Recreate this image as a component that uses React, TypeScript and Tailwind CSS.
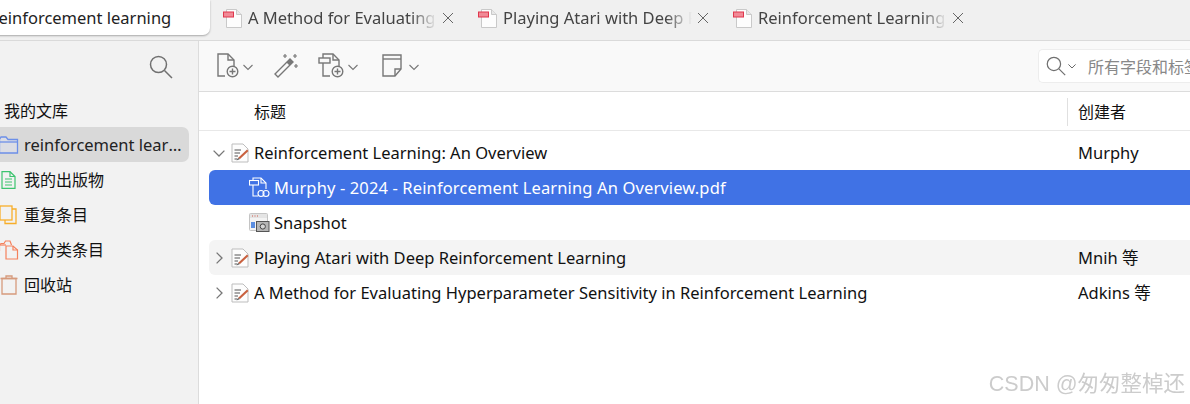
const uiFont = { fontFamily: '"Noto Sans", "Noto Sans CJK SC", sans-serif' };

function PdfIcon() {
  return (
    <svg width="20" height="20" viewBox="0 0 20 20" fill="none" className="shrink-0">
      <path d="M3.5 1.5H13.5L18.5 6.5V19.5H3.5Z" fill="#fdfdfd" stroke="#c9c9c9" />
      <path d="M13.5 1.5V6.5H18.5" fill="#e8e8e8" stroke="#c9c9c9" />
      <rect x="0.5" y="4" width="10" height="5" fill="#f08a96" stroke="#e0364c" />
    </svg>
  );
}

function CloseIcon() {
  return (
    <svg width="12" height="12" viewBox="0 0 12 12" fill="none" stroke="#666" className="shrink-0">
      <path d="M1 1L11 11M11 1L1 11" />
    </svg>
  );
}

function Chevron({ size = 10, color = "#777" }: { size?: number; color?: string }) {
  return (
    <svg width={size} height={size} viewBox="0 0 10 10" fill="none" stroke={color} strokeWidth="1.1">
      <path d="M0.5 3L5 7.5L9.5 3" />
    </svg>
  );
}

function SearchGlyph({ size = 24 }: { size?: number }) {
  return (
    <svg width={size} height={size} viewBox="0 0 24 24" fill="none" stroke="#707070" strokeWidth="1.5" className="shrink-0">
      <circle cx="9.5" cy="9.5" r="8" />
      <path d="M15.5 15.5L23 23" />
    </svg>
  );
}

function ToolbarIcons() {
  return (
    <div className="flex items-center">
      {/* new item */}
      <svg width="24" height="26" viewBox="0 0 24 26" fill="none" stroke="#777" strokeWidth="1.4" className="ml-[18px]">
        <path d="M8 23H1V1H11L17 7V14" />
        <path d="M11 1V7H17" />
        <circle cx="15.5" cy="18.5" r="5.3" fill="#f9f9f9" />
        <path d="M12.5 18.5H18.5M15.5 15.5V21.5" />
      </svg>
      <div className="ml-[2px] mt-[2px]"><Chevron /></div>
      {/* magic wand */}
      <svg width="26" height="26" viewBox="0 0 26 26" fill="none" className="ml-[20px]">
        <path d="M2 21L17 6L20 9L5 24Z" fill="#f9f9f9" stroke="#777" strokeWidth="1.4" />
        <path d="M13.5 9.5L16.5 12.5L20 9L17 6Z" fill="#777" />
        <path d="M12 1V5M10 3H14M22 1V5M20 3H24M23 11V15M21 13H25" stroke="#777" strokeWidth="1.2" />
      </svg>
      {/* attachment */}
      <svg width="28" height="26" viewBox="0 0 28 26" fill="none" stroke="#777" strokeWidth="1.4" className="ml-[19px]">
        <path d="M12 23H5V10M5 5V1H15L21 7V14" />
        <path d="M15 1V7H21" />
        <rect x="1" y="5" width="11" height="5" fill="#f9f9f9" />
        <circle cx="19.5" cy="18.5" r="5.3" fill="#f9f9f9" />
        <path d="M16.5 18.5H22.5M19.5 15.5V21.5" />
      </svg>
      <div className="ml-[2px] mt-[2px]"><Chevron /></div>
      {/* note */}
      <svg width="22" height="24" viewBox="0 0 22 24" fill="none" stroke="#777" strokeWidth="1.4" className="ml-[24px]">
        <path d="M1 1H19V15L13 22H1Z" />
        <path d="M1 5H19" />
        <path d="M13 22V15H19" />
      </svg>
      <div className="ml-[5px] mt-[2px]"><Chevron /></div>
    </div>
  );
}

function Tab({ title }: { title: string }) {
  return (
    <div className="flex w-[255px] shrink-0 items-center">
      <PdfIcon />
      <span className="ml-[5px] w-[189px] overflow-hidden whitespace-nowrap text-[16.5px] text-[#444] [mask-image:linear-gradient(to_right,black_86%,transparent)]">
        {title}
      </span>
      <div className="ml-[5px]"><CloseIcon /></div>
    </div>
  );
}

function CollectionIcon({ kind }: { kind: string }) {
  if (kind === "folder") {
    return (
      <svg width="20" height="18" viewBox="0 0 20 18" fill="none" stroke="#6c8fe8" strokeWidth="1.3">
        <path d="M0.5 17V3.5L2 1H7L9 3.5H18.5V17Z" fill="#dcdde4" />
        <path d="M0.5 6H18.5" />
      </svg>
    );
  }
  if (kind === "doc") {
    return (
      <svg width="20" height="18" viewBox="0 0 20 18" fill="none" stroke="#3cc46f" strokeWidth="1.2">
        <path d="M3 0.7H11L16 5.5V17.3H3Z" />
        <path d="M11 0.7V5.5H16M6 8H13M6 11H13M6 14H13" />
      </svg>
    );
  }
  if (kind === "dupes") {
    return (
      <svg width="20" height="20" viewBox="0 0 20 20" fill="none" stroke="#f7ae2a" strokeWidth="1.3">
        <path d="M13 4H17V18.5H6V15" />
        <rect x="1" y="1" width="12" height="14" fill="#f2f2f2" />
      </svg>
    );
  }
  if (kind === "unfiled") {
    return (
      <svg width="20" height="20" viewBox="0 0 20 20" fill="none" stroke="#f5815c" strokeWidth="1.2">
        <path d="M0.5 11V5L2 3.5H5L6.5 1H11L12.5 5" />
        <path d="M0.5 5H7" />
        <path d="M7 6H14L18.5 10V19H7Z" fill="#f2f2f2" />
        <path d="M14 6V10H18.5" />
      </svg>
    );
  }
  return (
    <svg width="20" height="20" viewBox="0 0 20 20" fill="none" stroke="#d69a7c" strokeWidth="1.3">
      <path d="M3 3.5H17V19H3Z" />
      <path d="M1.5 3.5H18.5M7 3.5V1H13V3.5" />
    </svg>
  );
}

const collections = [
  { kind: "doc", label: "我的出版物" },
  { kind: "dupes", label: "重复条目" },
  { kind: "unfiled", label: "未分类条目" },
  { kind: "trash", label: "回收站" },
];

function Sidebar() {
  return (
    <aside className="flex w-[199px] shrink-0 flex-col border-r border-[#dcdcdc] bg-[#f2f2f2] text-[16px] text-[#111]">
      <div className="flex h-[51px] items-center justify-end pr-[25px]">
        <SearchGlyph />
      </div>
      <div className="flex h-[35px] items-center pl-[4px] pt-[2px]">我的文库</div>
      <div className="mr-[9px] flex h-[35px] items-center rounded-r-[7px] bg-[#d9d9d9] pr-[6px]">
        <div className="w-[24px] shrink-0 -ml-px"><CollectionIcon kind="folder" /></div>
        <span className="ml-px truncate pt-px text-[16.5px] text-[#222]">reinforcement learning</span>
      </div>
      {collections.map((c) => (
        <div key={c.kind} className="flex h-[35px] items-center">
          <div className="w-[24px] shrink-0 -ml-px"><CollectionIcon kind={c.kind} /></div>
          <span className="ml-px pt-px">{c.label}</span>
        </div>
      ))}
    </aside>
  );
}

function ItemIcon() {
  return (
    <svg width="18" height="20" viewBox="0 0 18 20" fill="none" className="shrink-0">
      <path d="M1 1H12L17 6V19H1Z" fill="#fdfdfd" stroke="#bdbdbd" />
      <path d="M3.5 7H10M3.5 10H9M3.5 13H7M3.5 16H6" stroke="#555" />
      <path d="M7 15L16 6.5L17.5 8L9 16Z" fill="#c9613f" />
      <path d="M5.5 17.5L7 15L9 16Z" fill="#555" />
    </svg>
  );
}

function AttachmentIcon() {
  return (
    <svg width="21" height="21" viewBox="0 0 21 21" fill="none" stroke="#fff" strokeWidth="1.1" className="shrink-0">
      <path d="M4 7V19H9M4 4V1H12L17 6V12" />
      <path d="M12 1V6H17" />
      <rect x="0.5" y="3.5" width="9" height="4.5" fill="#4072e5" />
      <circle cx="12" cy="16.5" r="3" />
      <circle cx="17" cy="16.5" r="3" />
    </svg>
  );
}

function SnapshotIcon() {
  return (
    <svg width="21" height="20" viewBox="0 0 21 20" fill="none" className="shrink-0">
      <rect x="0.5" y="0.5" width="18" height="17" rx="1" fill="#f3f3f3" stroke="#c4c4c4" />
      <path d="M1 1H18V5H1Z" fill="#e4e4e4" />
      <path d="M3 3H4M5.5 3H6.5M8 3H9" stroke="#d05a4a" />
      <rect x="2" y="9" width="4" height="6" fill="#5a8de0" />
      <rect x="7.5" y="8.5" width="12.5" height="10" fill="#b5b5b5" stroke="#555" />
      <circle cx="13.8" cy="13.5" r="2.6" fill="#d4d4d4" stroke="#444" />
    </svg>
  );
}

function ItemRow({
  title,
  creator,
  state,
  rowClass = "",
}: {
  title: string;
  creator: string;
  state: "open" | "closed";
  rowClass?: string;
}) {
  return (
    <div className={`flex h-[35px] items-center rounded-l-[6px] ${rowClass}`}>
      <div className="flex w-[22px] shrink-0 justify-center pr-[2px]">
        <div className={state === "closed" ? "-rotate-90" : ""}>
          <Chevron size={12} color="#777" />
        </div>
      </div>
      <ItemIcon />
      <span className="ml-[5px] flex-1 whitespace-nowrap pt-[2px]">{title}</span>
      <span className="w-[112px] shrink-0 pt-[2px]">{creator}</span>
    </div>
  );
}

export default function App() {
  return (
    <div className="relative flex h-[404px] w-[1190px] flex-col overflow-hidden bg-white" style={uiFont}>
      <header className="flex h-[41px] shrink-0 items-start border-b border-[#dadada] bg-[#f0f0f0]">
        <div className="-ml-[18px] flex h-[35px] w-[228px] shrink-0 items-center rounded-br-[7px] bg-white pl-[10px] pt-[2px] text-[16.5px] text-[#222] shadow-[0_1px_2px_rgba(0,0,0,0.3)]">
          reinforcement learning
        </div>
        <div className="ml-[13px] flex h-[36px] items-center">
          <Tab title="A Method for Evaluating H" />
          <Tab title="Playing Atari with Deep R" />
          <Tab title="Reinforcement Learning: A" />
        </div>
      </header>

      <div className="flex min-h-0 flex-1">
        <Sidebar />
        <main className="flex min-w-0 flex-1 flex-col">
          <div className="flex h-[51px] shrink-0 items-center justify-between border-b border-[#dcdcdc] bg-[#f9f9f9]">
            <ToolbarIcons />
            <div className="flex h-[34px] w-[152px] items-center overflow-hidden rounded-l-[5px] border border-r-0 border-[#ededed] bg-white pl-[7px] text-[16px] whitespace-nowrap text-[#888]">
              <SearchGlyph size={20} />
              <div className="ml-[2px] w-[9px] shrink-0"><Chevron size={8} color="#555" /></div>
              <span className="ml-[11px] pt-px">所有字段和标签</span>
            </div>
          </div>

          <div className="flex h-[39px] shrink-0 items-center border-b border-[#e8e8e8] pt-px text-[16px] text-[#111]">
            <div className="flex-1 pl-[55px]">标题</div>
            <div className="flex h-[28px] w-[123px] items-center border-l border-[#e0e0e0] pl-[10px]">创建者</div>
          </div>

          <div className="ml-[10px] mt-[4px] flex flex-col text-[16.5px] text-[#111]">
            <ItemRow title="Reinforcement Learning: An Overview" creator="Murphy" state="open" />
            <div className="flex h-[35px] items-center rounded-l-[6px] bg-[#4072e5] text-white">
              <div className="w-[40px] shrink-0" />
              <AttachmentIcon />
              <span className="ml-[4px] whitespace-nowrap pt-[2px] tracking-[0.13px]">Murphy - 2024 - Reinforcement Learning An Overview.pdf</span>
            </div>
            <div className="flex h-[35px] items-center">
              <div className="w-[40px] shrink-0" />
              <SnapshotIcon />
              <span className="ml-[4px] pt-[2px]">Snapshot</span>
            </div>
            <ItemRow
              title="Playing Atari with Deep Reinforcement Learning"
              creator="Mnih 等"
              state="closed"
              rowClass="bg-[#f4f4f4]"
            />
            <ItemRow
              title="A Method for Evaluating Hyperparameter Sensitivity in Reinforcement Learning"
              creator="Adkins 等"
              state="closed"
            />
          </div>
        </main>
      </div>

      {/* site watermark */}
      <div className="absolute right-[5px] bottom-[4px] font-['Liberation_Sans','Noto_Sans_CJK_SC',sans-serif] text-[21.5px] whitespace-nowrap text-[#cccccc] blur-[0.4px]">
        CSDN @匆匆整棹还
      </div>
    </div>
  );
}
